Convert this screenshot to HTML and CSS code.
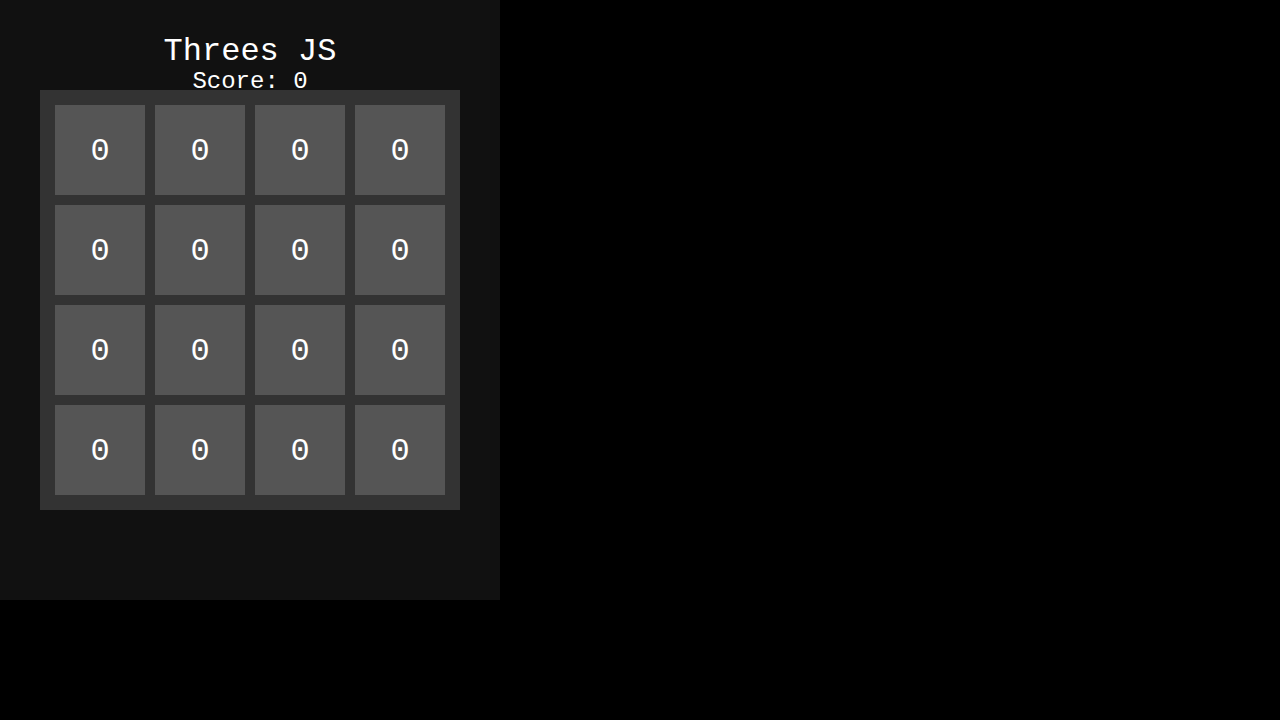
FILE: index.html
```html
<!DOCTYPE html>
<html>
<head>
<meta charset="utf-8">
<title>Threes JS</title>
<link rel="stylesheet" href="styles.css">
</head>
<body>
<div class="app">
  <h1 class="title">Threes JS</h1>
  <div class="score">Score: 0</div>
  <div class="board">
    <div class="tile">0</div><div class="tile">0</div><div class="tile">0</div><div class="tile">0</div>
    <div class="tile">0</div><div class="tile">0</div><div class="tile">0</div><div class="tile">0</div>
    <div class="tile">0</div><div class="tile">0</div><div class="tile">0</div><div class="tile">0</div>
    <div class="tile">0</div><div class="tile">0</div><div class="tile">0</div><div class="tile">0</div>
  </div>
</div>
</body>
</html>
```

FILE: styles.css
```css
html, body {
  margin: 0;
  padding: 0;
  background: #000;
}
body {
  font-family: "Liberation Mono", "Courier New", monospace;
  color: #fff;
}
.app {
  width: 500px;
  height: 600px;
  background: #111;
  display: flex;
  flex-direction: column;
  align-items: center;
  padding-top: 34px;
  box-sizing: border-box;
}
.title {
  margin: 0;
  font-size: 32px;
  font-weight: normal;
  line-height: 36px;
}
.score {
  font-size: 24px;
  line-height: 24px;
}
.board {
  margin-top: -4px;
  width: 420px;
  height: 420px;
  box-sizing: border-box;
  background: #333;
  padding: 15px;
  display: grid;
  grid-template-columns: repeat(4, 90px);
  grid-template-rows: repeat(4, 90px);
  gap: 10px;
}
.tile {
  background: #555;
  display: flex;
  align-items: center;
  justify-content: center;
  font-size: 32px;
  padding-top: 2px;
  box-sizing: border-box;
}
```
